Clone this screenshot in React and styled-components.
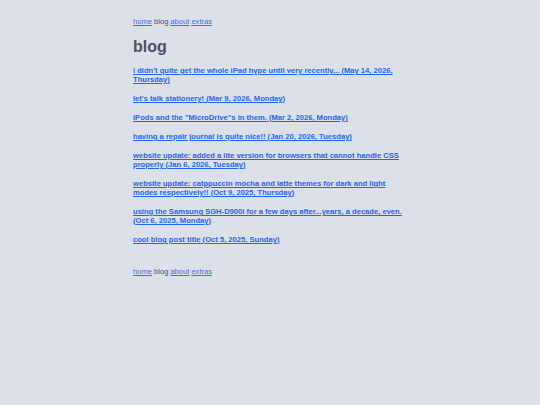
import React from 'react'
import styled, { createGlobalStyle } from 'styled-components'

const GlobalStyle = createGlobalStyle`
	html, body {
		margin: 0;
		padding: 0;
		background: #dce0e8;
	}
	body {
		font-family: 'Liberation Sans', Arial, sans-serif;
		color: #4c4f69;
	}
`

const Page = styled.div`
	width: 274px;
	margin: 0 auto;
	padding: 17px 0 40px;
`

const Nav = styled.nav`
	font-size: 7.6px;
	line-height: 10px;
	display: flex;
	gap: 2px;
	margin-top: ${(p) => p.top || 0}px;
`

const NavLink = styled.a`
	color: #3e6df0;
	text-decoration: underline;
`

const NavCurrent = styled.span`
	color: #4c4f69;
`

const Heading = styled.h1`
	font-size: 16px;
	line-height: 18px;
	font-weight: bold;
	margin: 11px 0 10px;
	color: #4c4f69;
`

const PostList = styled.ul`
	list-style: none;
	margin: 0;
	padding: 0;
	display: flex;
	flex-direction: column;
	gap: 10px;
`

const PostItem = styled.li`
	font-size: 7.6px;
	line-height: 9px;
`

const PostLink = styled.a`
	font-weight: bold;
	color: #1e66f5;
	text-decoration: underline;
`

const posts = [
	{ title: "i didn't quite get the whole iPad hype until very recently...", date: 'May 14, 2026, Thursday' },
	{ title: "let's talk stationery!", date: 'Mar 9, 2026, Monday' },
	{ title: 'iPods and the "MicroDrive"s in them.', date: 'Mar 2, 2026, Monday' },
	{ title: 'having a repair journal is quite nice!!', date: 'Jan 20, 2026, Tuesday' },
	{ title: 'website update: added a lite version for browsers that cannot handle CSS properly', date: 'Jan 6, 2026, Tuesday' },
	{ title: 'website update: catppuccin mocha and latte themes for dark and light modes respectively!!', date: 'Oct 9, 2025, Thursday' },
	{ title: 'using the Samsung SGH-D900i for a few days after...years, a decade, even.', date: 'Oct 6, 2025, Monday' },
	{ title: 'cool blog post title', date: 'Oct 5, 2025, Sunday' },
]

const Menu = ({ top }) => {
	return (
		<Nav top={top}>
			<NavLink href='#'>home</NavLink>
			<NavCurrent>blog</NavCurrent>
			<NavLink href='#'>about</NavLink>
			<NavLink href='#'>extras</NavLink>
		</Nav>
	)
}

const App = () => {
	return (
		<>
			<GlobalStyle />
			<Page>
				<Menu />
				<Heading>blog</Heading>
				<PostList>
					{posts.map((post) => (
						<PostItem key={post.title}>
							<PostLink href='#'>
								{post.title} ({post.date})
							</PostLink>
						</PostItem>
					))}
				</PostList>
				<Menu top={23} />
			</Page>
		</>
	)
}

export default App
